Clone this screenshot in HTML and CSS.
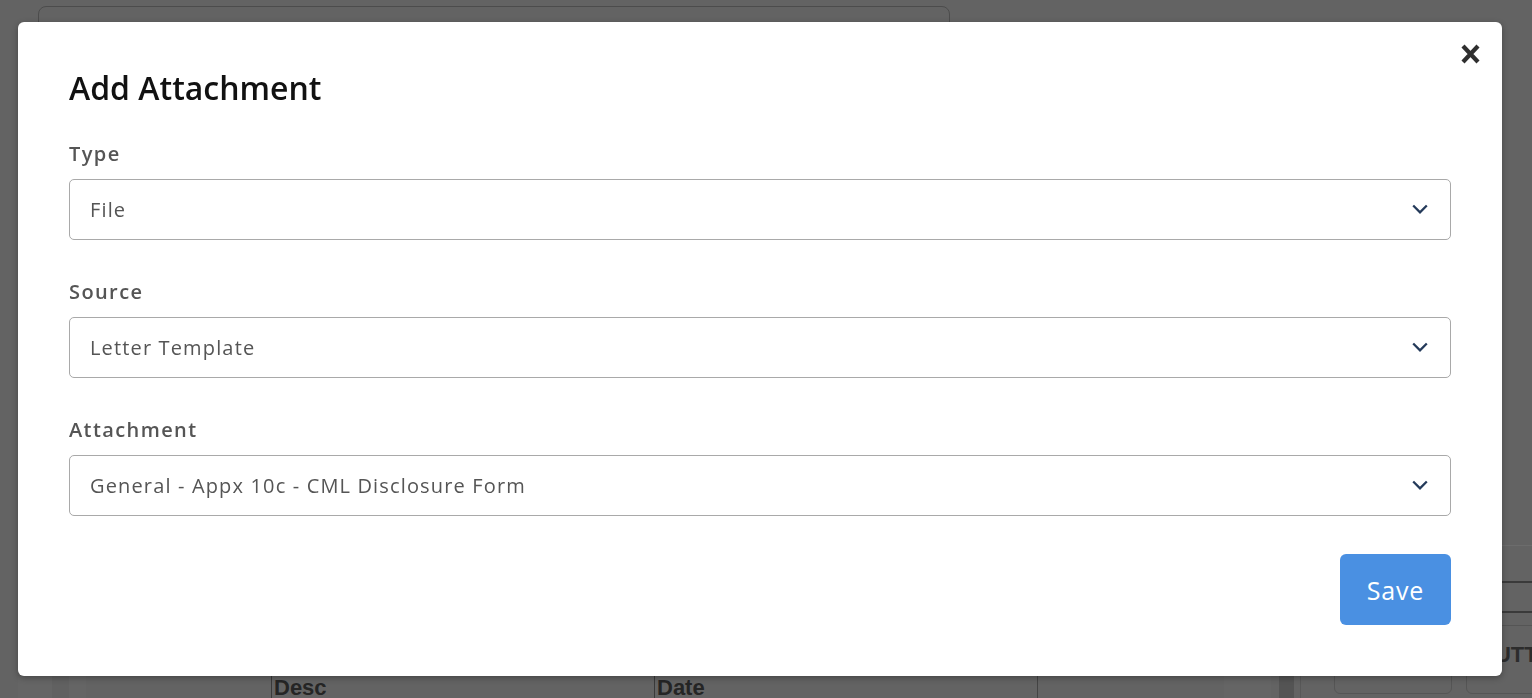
FILE: index.html
```html
<!DOCTYPE html>
<html lang="en">
<head>
<meta charset="utf-8">
<title>Add Attachment</title>
<link rel="stylesheet" href="styles.css">
</head>
<body>
<div class="page">
  <div class="main">
    <div class="card"></div>
    <div class="table-head">
      <div class="th-lead">
        <span class="faint f1"></span><span class="faint f2"></span><span class="faint f3"></span><span class="faint f4"></span>
      </div>
      <div class="th">Desc</div>
      <div class="th">Date</div>
      <div class="th-rest">
        <span class="rest-gap"></span><span class="rest-light"></span><span class="rest-gap2"></span><span class="rest-bar"></span>
      </div>
    </div>
  </div>
  <div class="side">
    <div class="side-panel">
      <div class="side-row row-light"></div>
      <div class="side-row row-dark"></div>
      <div class="side-row row-dark row-buttons">
        <div class="bg-btn">Print</div>
        <div class="bg-btn bg-btn-wide">BUTTON</div>
      </div>
    </div>
  </div>
</div>

<div class="modal" role="dialog" aria-labelledby="modal-title">
  <button class="close" type="button" aria-label="Close">
    <svg width="19" height="20" viewBox="0 0 19 20"><path d="M2 2 L17 18 M17 2 L2 18" stroke="#2f2f2f" stroke-width="4.2" fill="none"/></svg>
  </button>
  <h2 class="modal-title" id="modal-title">Add Attachment</h2>
  <div class="fields">
    <div class="field">
      <div class="label">Type</div>
      <div class="select">
        <span class="value">File</span>
        <svg class="chev" width="16" height="11" viewBox="0 0 16 11"><path d="M1.2 1.5 L8 8.3 L14.8 1.5" stroke="#243a5a" stroke-width="2.3" fill="none"/></svg>
      </div>
    </div>
    <div class="field">
      <div class="label">Source</div>
      <div class="select">
        <span class="value">Letter Template</span>
        <svg class="chev" width="16" height="11" viewBox="0 0 16 11"><path d="M1.2 1.5 L8 8.3 L14.8 1.5" stroke="#243a5a" stroke-width="2.3" fill="none"/></svg>
      </div>
    </div>
    <div class="field">
      <div class="label">Attachment</div>
      <div class="select">
        <span class="value">General - Appx 10c - CML Disclosure Form</span>
        <svg class="chev" width="16" height="11" viewBox="0 0 16 11"><path d="M1.2 1.5 L8 8.3 L14.8 1.5" stroke="#243a5a" stroke-width="2.3" fill="none"/></svg>
      </div>
    </div>
  </div>
  <div class="footer">
    <button class="save" type="button">Save</button>
  </div>
</div>
</body>
</html>
```
FILE: styles.css
```css
* { box-sizing: border-box; }
html, body { margin: 0; padding: 0; }
body {
  background: #636363;
  font-family: "Open Sans", "Noto Sans", sans-serif;
  width: 1532px;
  height: 698px;
  overflow: hidden;
}

/* background page (seen through the overlay) */
.page {
  display: grid;
  grid-template-columns: 1300px 232px;
  height: 698px;
  overflow: hidden;
}
.main {
  display: flex;
  flex-direction: column;
}
.card {
  margin: 6px 0 0 38px;
  width: 912px;
  height: 664px;
  border: 1px solid #4c4c4c;
  border-radius: 8px;
  flex: none;
}
.table-head {
  margin-top: 6px;
  display: flex;
  height: 40px;
  flex: none;
  font-family: "Liberation Sans", Arial, sans-serif;
  font-weight: 700;
  font-size: 22px;
  color: #252525;
}
.th-lead {
  width: 271px;
  display: flex;
}
.faint { display: block; height: 100%; }
.f1 { width: 18px; }
.f2 { width: 34px; background: #656565; }
.f3 { width: 17px; background: #616161; }
.f4 { width: 17px; background: #656565; }
.th {
  width: 383px;
  border-left: 1px solid #3a3a3a;
  padding: 1px 0 0 2px;
  line-height: 22px;
}
.th-rest {
  width: 263px;
  border-left: 1px solid #444;
  display: flex;
}
.rest-gap { width: 186px; }
.rest-light { width: 47px; background: #656565; }
.rest-gap2 { width: 8px; }
.rest-bar { width: 15px; background: #545454; }

.side {
  display: flex;
  flex-direction: column;
}
.side-panel {
  margin-top: 545px;
  border-left: 1px solid #585858;
  flex: 1;
  display: flex;
  flex-direction: column;
}
.side-row { flex: none; }
.row-light { height: 36px; border-top: 1px solid #6c6c6c; }
.row-dark { height: 30px; border-top: 2px solid #3a3a3a; }
.row-buttons {
  height: auto;
  flex: 1;
  display: flex;
  gap: 14px;
  padding: 12px 0 0 33px;
}
.bg-btn {
  width: 118px;
  height: 69px;
  border: 1px solid #555;
  border-radius: 6px;
  font-family: "Liberation Sans", Arial, sans-serif;
  font-weight: 700;
  font-size: 22px;
  color: #2c2c2c;
  padding: 16px 0 0 12px;
  flex: none;
}
.bg-btn-wide { width: 140px; }

/* modal */
.modal {
  position: fixed;
  left: 18px;
  top: 22px;
  width: 1484px;
  background: #fff;
  border-radius: 6px;
  padding: 46px 51px 51px;
  box-shadow: 0 2px 6px rgba(0, 0, 0, 0.3);
}
.close {
  position: absolute;
  top: 22px;
  right: 22px;
  width: 19px;
  height: 20px;
  padding: 0;
  border: 0;
  background: none;
  display: block;
}
.close svg { display: block; }
.modal-title {
  margin: 0;
  font-size: 32px;
  line-height: 40px;
  font-weight: 600;
  color: #111;
}
.fields {
  margin-top: 31px;
  display: flex;
  flex-direction: column;
  gap: 37px;
}
.field {
  display: flex;
  flex-direction: column;
  gap: 10px;
}
.label {
  font-size: 20px;
  line-height: 30px;
  font-weight: 600;
  color: #555;
  letter-spacing: 1.4px;
}
.select {
  height: 61px;
  border: 1px solid #a9a9a9;
  border-radius: 5px;
  display: flex;
  align-items: center;
  justify-content: space-between;
  padding: 0 22px 0 20px;
}
.value {
  font-size: 20px;
  line-height: 30px;
  color: #555;
  letter-spacing: 1.15px;
}
.chev { display: block; flex: none; }
.footer {
  margin-top: 38px;
  display: flex;
  justify-content: flex-end;
}
.save {
  width: 111px;
  height: 71px;
  border: 0;
  border-radius: 6px;
  background: #4a90e2;
  color: #fff;
  font-family: "Open Sans", "Noto Sans", sans-serif;
  font-size: 25px;
  font-weight: 500;
  letter-spacing: 0.8px;
  padding: 0;
}
```
